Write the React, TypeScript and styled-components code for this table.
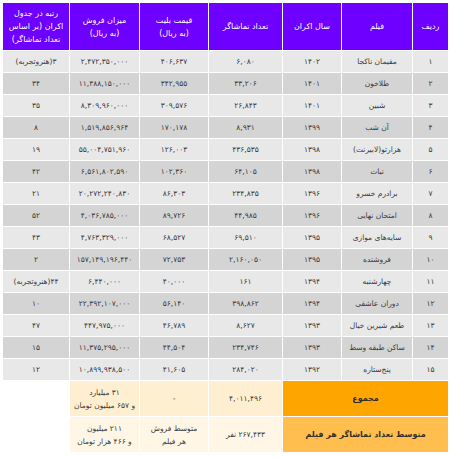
import styled, { createGlobalStyle } from "styled-components";

const GlobalStyle = createGlobalStyle`
  body {
    margin: 0;
    background: #ffffff;
    font-family: "DejaVu Sans", sans-serif;
  }
`;

const Wrapper = styled.div`
  padding: 2px;
  width: 446px;
`;

const Table = styled.table`
  direction: rtl;
  width: 446px;
  table-layout: fixed;
  border-collapse: collapse;
  font-family: "DejaVu Sans", sans-serif;
  color: #3a3a3a;
`;

const HeadCell = styled.th`
  height: 47px;
  padding: 0 3px;
  background: #6e00ff;
  color: #ffffff;
  font-size: 8px;
  font-weight: normal;
  line-height: 13px;
  text-align: center;
  border: 1px solid #ffffff;
`;

const Cell = styled.td<{ $dark: boolean }>`
  height: 21px;
  padding: 0 2px;
  background: ${(props) => (props.$dark ? "#d4d4d4" : "#e8e8e8")};
  font-size: 7.5px;
  text-align: center;
  white-space: nowrap;
  border: 1px solid #ffffff;
`;

const SummaryLabel = styled.td<{ $tone: "total" | "avg" }>`
  height: 33px;
  background: ${(props) => (props.$tone === "total" ? "#ffa500" : "#ffbe4d")};
  color: #2e2e2e;
  font-size: 8px;
  font-weight: bold;
  text-align: center;
  border: 1px solid #ffffff;
`;

const SummaryCell = styled.td<{ $tone: "total" | "avg" }>`
  height: 33px;
  padding: 0 2px;
  background: ${(props) => (props.$tone === "total" ? "#ffefd1" : "#fff6e6")};
  font-size: 7.5px;
  line-height: 13px;
  text-align: center;
  border: 1px solid #ffffff;
`;

const Blank = styled.td`
  background: #ffffff;
  border: 1px solid #ffffff;
`;

const widths = [36, 71, 59, 74, 69, 70, 67];

const rows = [
  ["۱", "مقیمان ناکجا", "۱۴۰۲", "۶,۰۸۰", "۴۰۶,۶۳۷", "۲,۴۷۲,۳۵۰,۰۰۰", "۳(هنروتجربه)"],
  ["۲", "طلاخون", "۱۴۰۱", "۳۳,۲۰۶", "۳۴۲,۹۵۵", "۱۱,۳۸۸,۱۵۰,۰۰۰", "۳۴"],
  ["۳", "شبین", "۱۴۰۱", "۲۶,۸۴۳", "۳۰۹,۵۷۶", "۸,۳۰۹,۹۶۰,۰۰۰", "۳۵"],
  ["۴", "آن شب", "۱۳۹۹", "۸,۹۳۱", "۱۷۰,۱۷۸", "۱,۵۱۹,۸۵۶,۹۶۴", "۸"],
  ["۵", "هزارتو(لابیرنت)", "۱۳۹۸", "۴۳۶,۵۳۵", "۱۲۶,۰۰۳", "۵۵,۰۰۴,۷۵۱,۹۶۰", "۱۹"],
  ["۶", "نبات", "۱۳۹۸", "۶۴,۱۰۵", "۱۰۲,۳۶۰", "۶,۵۶۱,۸۰۲,۵۹۰", "۴۲"],
  ["۷", "برادرم خسرو", "۱۳۹۶", "۲۳۴,۸۳۵", "۸۶,۳۰۳", "۲۰,۲۷۲,۲۴۰,۸۳۰", "۲۱"],
  ["۸", "امتحان نهایی", "۱۳۹۶", "۴۴,۹۸۵", "۸۹,۷۲۶", "۴,۰۳۶,۷۸۵,۰۰۰", "۵۲"],
  ["۹", "سایه‌های موازی", "۱۳۹۵", "۶۹,۵۱۰", "۶۸,۵۲۷", "۴,۷۶۳,۳۲۹,۰۰۰", "۴۳"],
  ["۱۰", "فروشنده", "۱۳۹۵", "۲,۱۶۰,۰۵۰", "۷۲,۷۵۳", "۱۵۷,۱۴۹,۱۹۶,۴۴۰", "۲"],
  ["۱۱", "چهارشنبه", "۱۳۹۴", "۱۶۱", "۴۰,۰۰۰", "۶,۴۴۰,۰۰۰", "۴۴(هنروتجربه)"],
  ["۱۲", "دوران عاشقی", "۱۳۹۴", "۳۹۸,۸۶۲", "۵۶,۱۴۰", "۲۲,۳۹۲,۱۰۷,۰۰۰", "۱۰"],
  ["۱۳", "طعم شیرین خیال", "۱۳۹۳", "۸,۶۲۷", "۴۶,۷۸۹", "۴۴۷,۹۷۵,۰۰۰", "۴۷"],
  ["۱۴", "ساکن طبقه وسط", "۱۳۹۳", "۲۳۴,۷۴۶", "۴۴,۵۰۴", "۱۱,۳۷۵,۲۹۵,۰۰۰", "۱۵"],
  ["۱۵", "پنج‌ستاره", "۱۳۹۲", "۲۸۴,۰۲۰", "۴۱,۶۰۵", "۱۰,۸۹۹,۹۳۸,۵۰۰", "۱۲"],
];

const App = () => {
  return (
    <Wrapper>
      <GlobalStyle />
      <Table>
        <colgroup>
          {widths.map((w, i) => (
            <col key={i} style={{ width: w }} />
          ))}
        </colgroup>
        <thead>
          <tr>
            <HeadCell>ردیف</HeadCell>
            <HeadCell>فیلم</HeadCell>
            <HeadCell>سال اکران</HeadCell>
            <HeadCell>تعداد تماشاگر</HeadCell>
            <HeadCell>
              قیمت بلیت
              <br />
              (به ریال)
            </HeadCell>
            <HeadCell>
              میزان فروش
              <br />
              (به ریال)
            </HeadCell>
            <HeadCell>
              رتبه در جدول
              <br />
              اکران (بر اساس
              <br />
              تعداد تماشاگر)
            </HeadCell>
          </tr>
        </thead>
        <tbody>
          {rows.map((row, i) => (
            <tr key={row[0]}>
              {row.map((value, j) => (
                <Cell key={j} $dark={i % 2 === 1}>
                  {value}
                </Cell>
              ))}
            </tr>
          ))}
          <tr>
            <SummaryLabel colSpan={3} $tone="total">
              مجموع
            </SummaryLabel>
            <SummaryCell $tone="total">۴,۰۱۱,۴۹۶</SummaryCell>
            <SummaryCell $tone="total">-</SummaryCell>
            <SummaryCell $tone="total">
              ۳۱ میلیارد
              <br />
              و ۶۵۷ میلیون تومان
            </SummaryCell>
            <Blank />
          </tr>
          <tr>
            <SummaryLabel colSpan={3} $tone="avg">
              متوسط تعداد تماشاگر هر فیلم
            </SummaryLabel>
            <SummaryCell $tone="avg">۲۶۷,۴۳۳ نفر</SummaryCell>
            <SummaryCell $tone="avg">
              متوسط فروش
              <br />
              هر فیلم
            </SummaryCell>
            <SummaryCell $tone="avg">
              ۲۱۱ میلیون
              <br />
              و ۴۶۶ هزار تومان
            </SummaryCell>
            <Blank />
          </tr>
        </tbody>
      </Table>
    </Wrapper>
  );
};

export default App;
